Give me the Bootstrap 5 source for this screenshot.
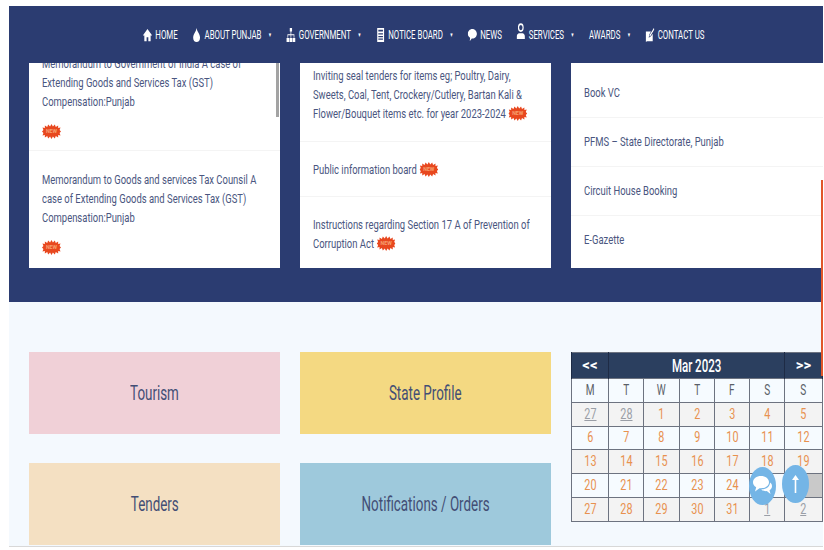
<!DOCTYPE html>
<html lang="en">
<head>
    <meta charset="UTF-8">
    <title>Punjab Government</title>
    <link href="https://cdn.jsdelivr.net/npm/bootstrap@5.3.0/dist/css/bootstrap.min.css" rel="stylesheet">
    <style>
        html, body { height: 550px; overflow: hidden; }
        body {
            background: #fff;
            font-family: Roboto, "Liberation Sans", sans-serif;
            color: #4a5680;
        }
        .page-wrap { position: relative; margin: 6px 1px 0 9px; }
        .top-band { background: #2b3c71; height: 296px; padding: 0 0 0 20px; }

        .main-nav { height: 57px; padding-right: 4px; }
        .main-nav ul { transform: scaleX(.655); flex-shrink: 0; gap: 22px; }
        .main-nav a {
            color: #fff;
            font-size: 12px;
            text-transform: uppercase;
            text-decoration: none;
            display: flex;
            align-items: center;
            gap: 5px;
        }
        .main-nav svg { width: 14px; height: 14px; fill: #fff; }
        .main-nav .up-icon { margin-top: -8px; height: 16px; }
        .nav-caret { font-size: 6px; margin-left: 5px; }

        .three-cols { display: grid; grid-template-columns: 251px 251px 1fr; gap: 20px; }
        .news-box {
            height: 205px;
            overflow: hidden;
            position: relative;
            justify-content: flex-end;
            border-radius: 0;
            border: 0;
        }
        .news-item {
            font-size: 13.5px;
            line-height: 19px;
            padding: 18px 13px;
            border-color: #f4f4f4;
            background: transparent;
            color: #4a5680;
        }
        .box-one .news-item { padding: 19px 13px 9px; }
        .box-one { padding-bottom: 2px; }
        .box-two .list-group { margin-bottom: -3px; }
        .box-two .news-item:nth-child(2) { padding-bottom: 17px; }
        .box-three .news-item { padding: 14px 13px 15px; }
        .box-three { justify-content: flex-start; padding-top: 6px; }
        .box-three .list-group { border-top: 1px solid #f4f4f4; border-bottom: 1px solid #f4f4f4; }
        .squeezed {
            display: block;
            width: 143%;
            transform: scaleX(.7);
            transform-origin: 0 0;
        }
        .burst-row { margin-top: 11px; height: 19px; display: flex; align-items: center; }
        .burst { width: 19px; height: 15px; display: inline-block; vertical-align: -3px; }
        .squeezed .burst { width: 27px; }
        .thumb-bar {
            position: absolute;
            top: 0; right: 1px;
            width: 3px; height: 54px;
            background: #a3a3a3;
        }

        .lower-band { background: #f4f9fe; height: 245px; padding: 50px 0 0 20px; border-bottom: 1px solid #d8d8d8; }
        .tile-grid { display: grid; grid-template-columns: 251px 251px; grid-auto-rows: 82px; gap: 29px 20px; }
        .tile {
            display: flex;
            align-items: center;
            justify-content: center;
            font-size: 20px;
            color: #434e75;
        }
        .tile span { display: inline-block; transform: scaleX(.67); white-space: nowrap; }
        .tile-pink { background: #f0d0d7; }
        .tile-yellow { background: #f4d982; }
        .tile-sand { background: #f4e0c2; }
        .tile-blue { background: #9ec9dc; }

        .cal-table { table-layout: fixed; width: 252px; margin: 0; align-self: start; border-color: #6d7380; --bs-table-bg: transparent; }
        .cal-table th, .cal-table td {
            padding: 0;
            height: 23.8px;
            text-align: center;
            vertical-align: middle;
            font-size: 15px;
            line-height: 1;
            font-weight: 400;
            color: #e8914f;
            background: #f6fbff;
        }
        .cal-table span { display: inline-block; transform: scaleX(.72); }
        .cal-table .cal-head th { background: #2b3f5f; color: #fff; height: 26px; font-size: 18px; font-weight: 500; border-color: #1e2b45; }
        .cal-table .cal-head span { transform: scaleX(.64); }
        .cal-table .cal-head .cal-step { font-size: 15px; font-weight: 700; }
        .cal-table .cal-head .cal-step span { transform: none; }
        .cal-table .cal-days th { color: #5a5f68; font-size: 14px; }
        .cal-table .alt-row td { background: #f3f3f3; }
        .cal-table td.off { color: #9a9ea6; }
        .cal-table td.off span { text-decoration: underline; }
        .cal-table td.today { background: #c9c9c9; color: #c9c9c9; }

        .float-btn {
            position: absolute;
            width: 27px; height: 38px;
            border-radius: 50%;
            background: #74b5e6;
            display: flex;
            align-items: center;
            justify-content: center;
        }
        .float-chat { left: 740px; top: 461px; }
        .float-top { left: 773px; top: 459px; }
        .edge-line { position: absolute; right: 0; top: 174px; width: 2px; height: 196px; background: #e0562a; }
    </style>
</head>
<body>
<svg width="0" height="0" class="d-block position-absolute">
    <symbol id="new-burst" viewBox="0 0 40 30" preserveAspectRatio="none">
        <polygon fill="#e8481f" points="20,0 23,5 27,1 29,6 34,3 34,8 39,7 37,12 40,15 37,18 39,23 34,22 34,27 29,24 27,29 23,25 20,30 17,25 13,29 11,24 6,27 6,22 1,23 3,18 0,15 3,12 1,7 6,8 6,3 11,6 13,1 17,5"/>
        <text x="20" y="19" text-anchor="middle" font-size="11" font-weight="700" fill="#f6a070" font-family="Roboto, sans-serif">NEW</text>
    </symbol>
</svg>

<div class="page-wrap">
    <div class="top-band">
        <nav class="main-nav d-flex align-items-center justify-content-center">
            <ul class="list-unstyled d-flex align-items-center m-0">
                <li><a href="#">
                    <svg viewBox="0 0 16 16"><path d="M8 1 0 8.500h2.500V15h4v-4.500h3V15h4V8.500H16z"/></svg>Home</a></li>
                <li><a href="#">
                    <svg viewBox="0 0 16 16"><path d="M8 0c.6 2 1 2.600 2 4 2 2.500 4 4.500 4 7 0 3-2.500 5-6 5s-6-2-6-5c0-2.500 2-4.500 4-7 1-1.400 1.400-2 2-4z"/></svg>About Punjab<span class="nav-caret">&#9660;</span></a></li>
                <li><a href="#">
                    <svg viewBox="0 0 16 16"><path d="M6 0h4v4H8.600v3H14v4h-1.200V8.300H8.600V11H7.400V8.300H3.200V11H2V7h5.400V4H6zM0 11.500h5V16H0zM5.800 11.500h4.400V16H5.800zM11 11.500h5V16h-5z"/></svg>Government<span class="nav-caret">&#9660;</span></a></li>
                <li><a href="#">
                    <svg viewBox="0 0 16 16"><path fill-rule="evenodd" d="M2 0h12v16H2zM4 2v2h8V2zM4 6v1.500h8V6zM4 9v1.500h8V9zM4 12v1.500h8V12z"/></svg>Notice Board<span class="nav-caret">&#9660;</span></a></li>
                <li><a href="#">
                    <svg viewBox="0 0 16 16"><path d="M8 1c4.400 0 8 2.500 8 5.600 0 3-3.600 5.500-8 5.500l-1-.1L3.500 15l.6-3.800C1.600 10.200 0 8.500 0 6.600 0 3.500 3.600 1 8 1z"/></svg>News</a></li>
                <li><a href="#">
                    <svg class="up-icon" viewBox="0 0 16 18"><path fill-rule="evenodd" d="M8 0a5 5 0 1 1 0 10A5 5 0 0 1 8 0zm0 2a3 3 0 1 0 0 6 3 3 0 0 0 0-6zM1 18v-3c0-2 2-3.500 4-3.500h6c2 0 4 1.500 4 3.500v3z"/></svg>Services<span class="nav-caret">&#9660;</span></a></li>
                <li><a href="#">Awards<span class="nav-caret">&#9660;</span></a></li>
                <li><a href="#">
                    <svg viewBox="0 0 16 16"><path d="M1 4h9L7 7.500 6 11l4-1.500 3-3V15H3l-2 1zM15 0l1 1.500-7 7.500-2 .8.800-2.200z"/></svg>Contact Us</a></li>
            </ul>
        </nav>

        <div class="three-cols">
            <div class="card news-box box-one d-flex flex-column">
                <div class="list-group list-group-flush">
                    <div class="list-group-item news-item">
                        <span class="squeezed">Memorandum to Government of India A case of Extending Goods and Services Tax (GST) Compensation:Punjab</span>
                        <div class="burst-row"><svg class="burst"><use href="#new-burst"/></svg></div>
                    </div>
                    <div class="list-group-item news-item">
                        <span class="squeezed">Memorandum to Goods and services Tax Counsil A case of Extending Goods and Services Tax (GST) Compensation:Punjab</span>
                        <div class="burst-row"><svg class="burst"><use href="#new-burst"/></svg></div>
                    </div>
                </div>
                <div class="thumb-bar"></div>
            </div>

            <div class="card news-box box-two d-flex flex-column">
                <div class="list-group list-group-flush">
                    <div class="list-group-item news-item">
                        <span class="squeezed">Inviting seal tenders for items eg; Poultry, Dairy, Sweets, Coal, Tent, Crockery/Cutlery, Bartan Kali &amp; Flower/Bouquet items etc. for year 2023-2024 <svg class="burst"><use href="#new-burst"/></svg></span>
                    </div>
                    <div class="list-group-item news-item">
                        <span class="squeezed">Public information board <svg class="burst"><use href="#new-burst"/></svg></span>
                    </div>
                    <div class="list-group-item news-item">
                        <span class="squeezed">Instructions regarding Section 17 A of Prevention of Corruption Act <svg class="burst"><use href="#new-burst"/></svg></span>
                    </div>
                </div>
            </div>

            <div class="card news-box box-three d-flex flex-column">
                <div class="list-group list-group-flush">
                    <div class="list-group-item news-item"><span class="squeezed">Book VC</span></div>
                    <div class="list-group-item news-item"><span class="squeezed">PFMS – State Directorate, Punjab</span></div>
                    <div class="list-group-item news-item"><span class="squeezed">Circuit House Booking</span></div>
                    <div class="list-group-item news-item"><span class="squeezed">E-Gazette</span></div>
                </div>
            </div>
        </div>
    </div>

    <div class="lower-band">
        <div class="three-cols">
            <div class="tile-grid" style="grid-column: span 2">
                <a class="tile tile-pink text-decoration-none" href="#"><span>Tourism</span></a>
                <a class="tile tile-yellow text-decoration-none" href="#"><span>State Profile</span></a>
                <a class="tile tile-sand text-decoration-none" href="#"><span>Tenders</span></a>
                <a class="tile tile-blue text-decoration-none" href="#"><span>Notifications / Orders</span></a>
            </div>
            <table class="table table-bordered cal-table">
                <colgroup><col style="width:37px"><col style="width:35px"><col style="width:36px"><col style="width:35px"><col style="width:35px"><col style="width:35px"><col></colgroup>
                <thead>
                    <tr class="cal-head"><th class="cal-step"><span>&lt;&lt;</span></th><th colspan="5"><span>Mar 2023</span></th><th class="cal-step"><span>&gt;&gt;</span></th></tr>
                    <tr class="cal-days"><th><span>M</span></th><th><span>T</span></th><th><span>W</span></th><th><span>T</span></th><th><span>F</span></th><th><span>S</span></th><th><span>S</span></th></tr>
                </thead>
                <tbody>
                    <tr class="alt-row"><td class="off"><span>27</span></td><td class="off"><span>28</span></td><td><span>1</span></td><td><span>2</span></td><td><span>3</span></td><td><span>4</span></td><td><span>5</span></td></tr>
                    <tr><td><span>6</span></td><td><span>7</span></td><td><span>8</span></td><td><span>9</span></td><td><span>10</span></td><td><span>11</span></td><td><span>12</span></td></tr>
                    <tr class="alt-row"><td><span>13</span></td><td><span>14</span></td><td><span>15</span></td><td><span>16</span></td><td><span>17</span></td><td><span>18</span></td><td><span>19</span></td></tr>
                    <tr><td><span>20</span></td><td><span>21</span></td><td><span>22</span></td><td><span>23</span></td><td><span>24</span></td><td><span>25</span></td><td class="today"><span>26</span></td></tr>
                    <tr class="alt-row"><td><span>27</span></td><td><span>28</span></td><td><span>29</span></td><td><span>30</span></td><td><span>31</span></td><td class="off"><span>1</span></td><td class="off"><span>2</span></td></tr>
                </tbody>
            </table>
        </div>
    </div>

    <div class="edge-line"></div>
    <a class="float-btn float-chat" href="#" aria-label="Chat">
        <svg width="21" height="22" viewBox="0 0 21 22" fill="#fff"><path d="M9 1c4.500 0 8 2.700 8 6.200 0 3.400-3.500 6.100-8 6.100l-1.500-.1L3 16.500l1.200-4.300C2 11.100 1 9.300 1 7.200 1 3.700 4.500 1 9 1z"/><path d="M18 7.500c1.300.9 2 2.200 2 3.700 0 1.700-1 3.100-2.500 4l1 3.800-3.700-2.900c-2.200.2-4.300-.5-5.600-1.700 4.500 0 8.800-2.500 8.800-6.900z"/></svg>
    </a>
    <a class="float-btn float-top" href="#" aria-label="Back to top">
        <svg width="9" height="18" viewBox="0 0 9 18" fill="#fff"><path d="M4.500 0 8 5H5.300v13H3.700V5H1z"/></svg>
    </a>
</div>

<script src="https://cdn.jsdelivr.net/npm/bootstrap@5.3.0/dist/js/bootstrap.bundle.min.js"></script>
</body>
</html>
